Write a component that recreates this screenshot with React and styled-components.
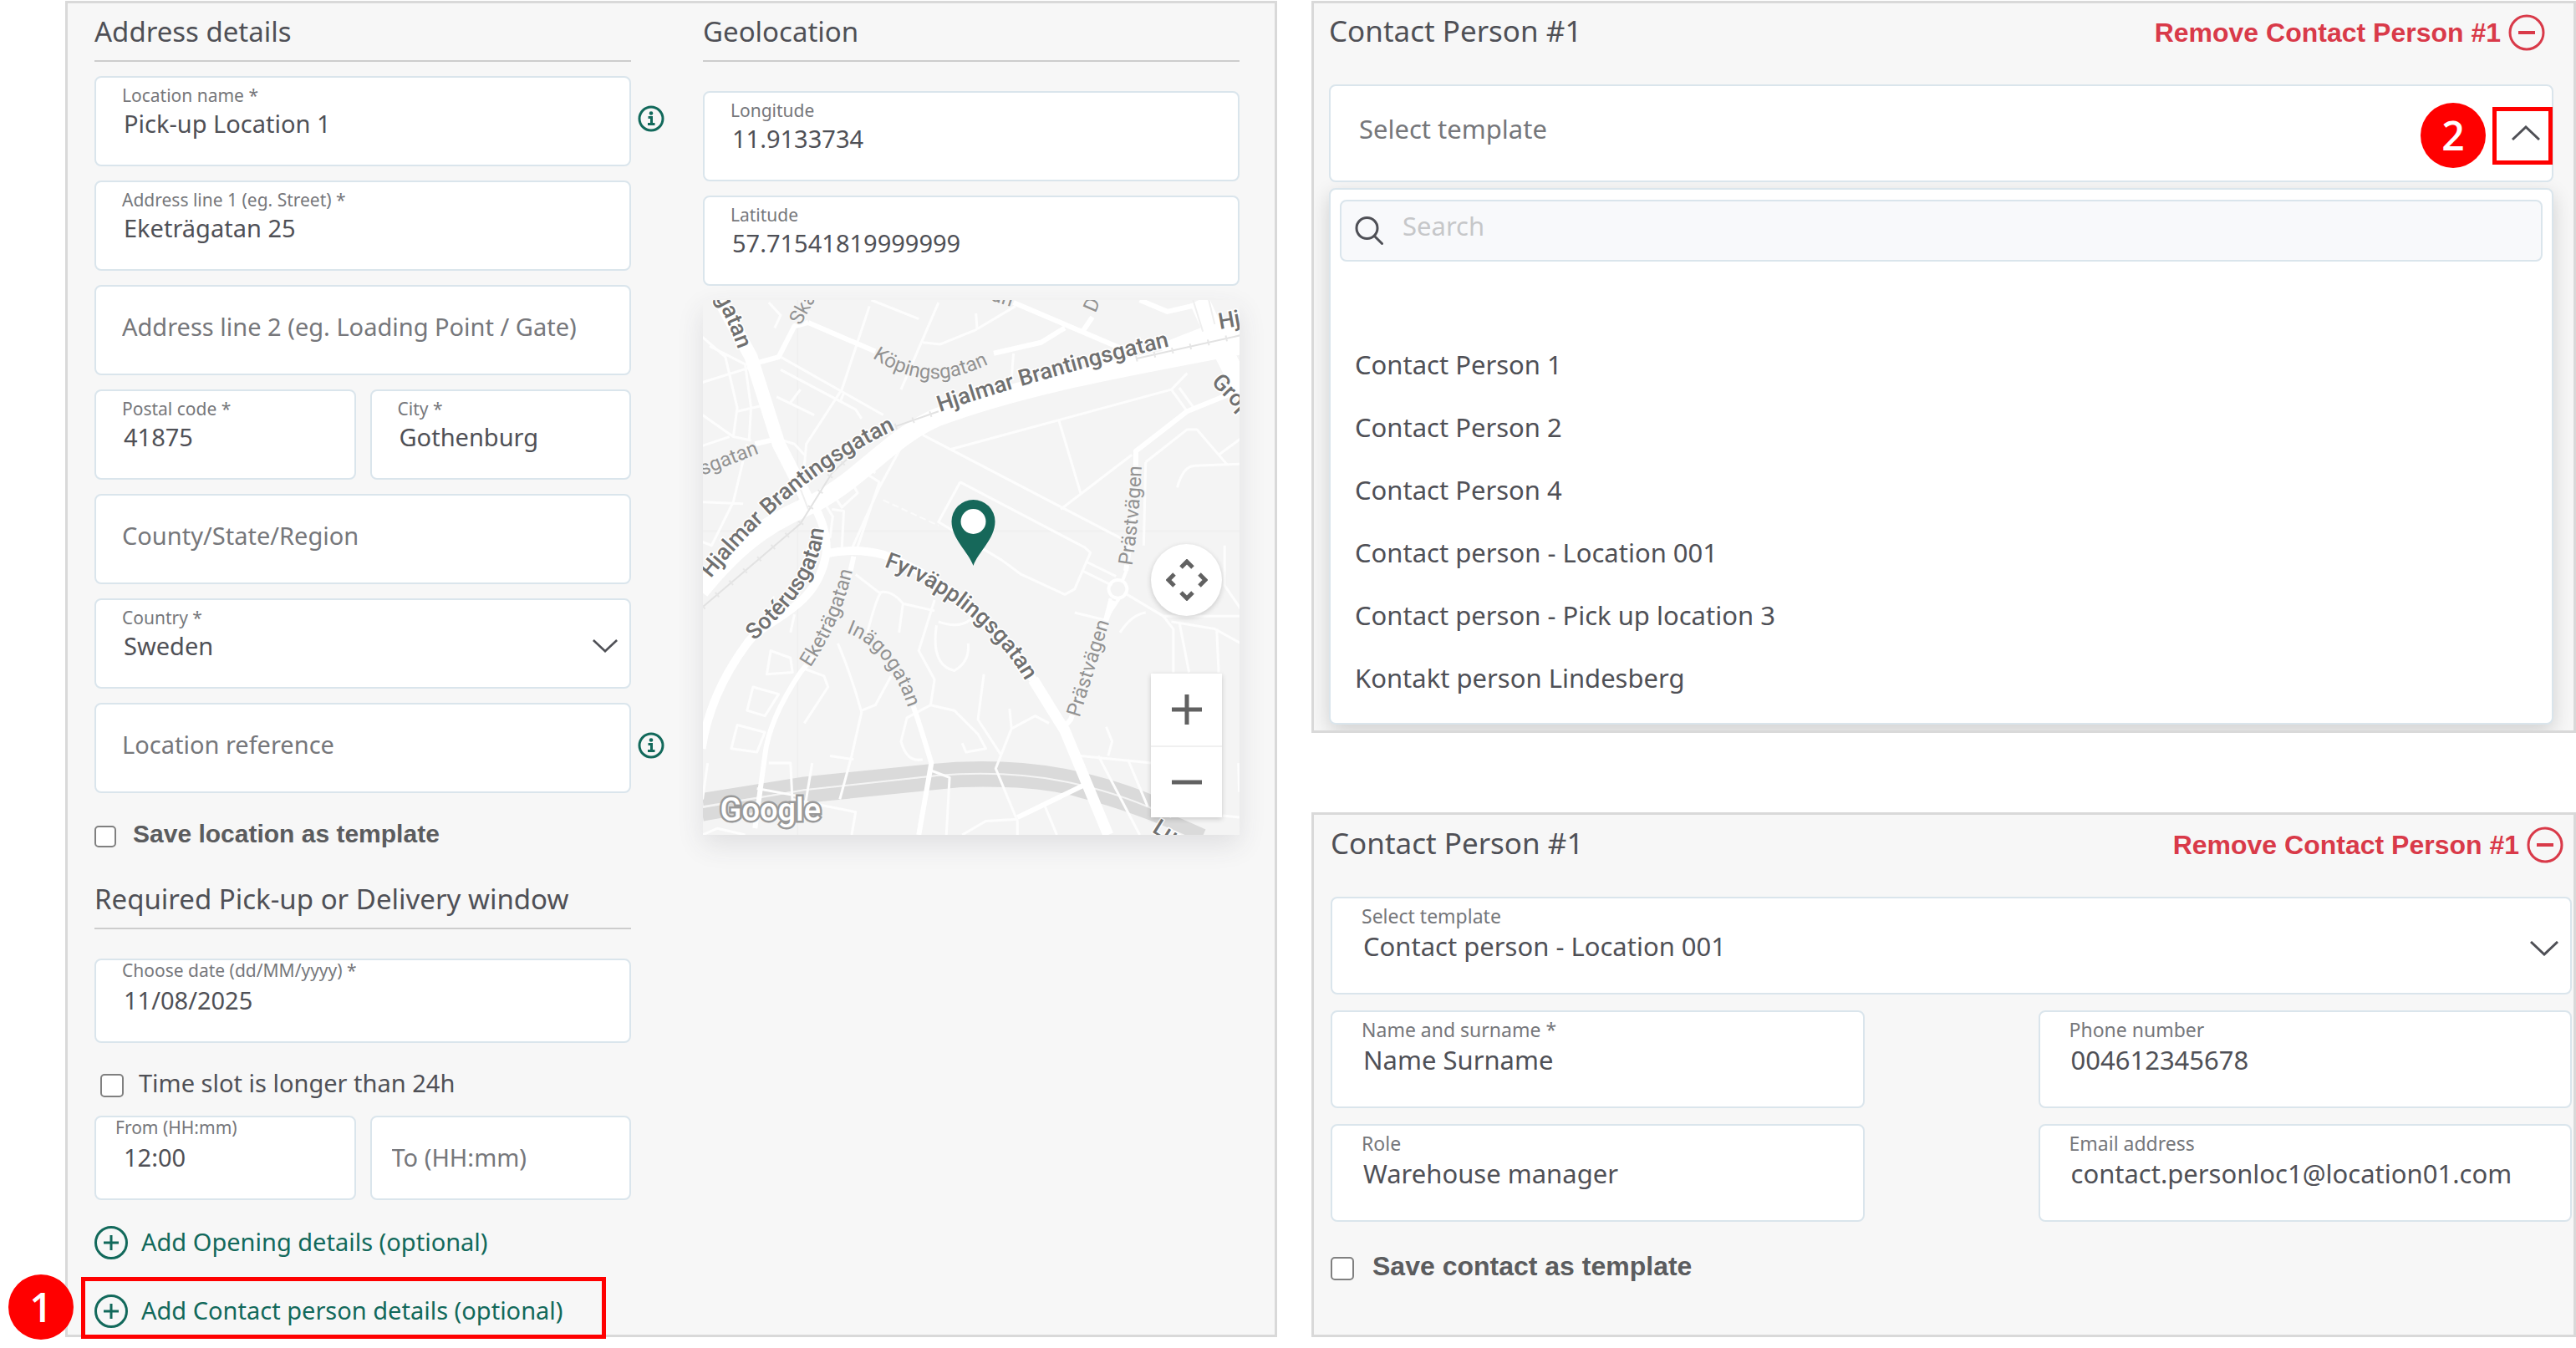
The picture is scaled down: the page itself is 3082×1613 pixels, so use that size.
import React from 'react';
import styled, { createGlobalStyle, ThemeProvider } from 'styled-components';

const GlobalStyle = createGlobalStyle`
  *, *::before, *::after { box-sizing: border-box; }
  body { margin: 0; background: #fff; color: #4f5056; font-family: "Noto Sans", "Open Sans", sans-serif; }
  button, input, select { font: inherit; color: inherit; margin: 0; }
`;

const compact = { title: 33, titleLine: 44, value: 29, label: 21, labelLine: 28, top: 7, emptyTop: 28, inset: 31, shift: 2, field: 108, strong: 30, row: 40, chevron: 30 };
const large = { title: 35, titleLine: 48, value: 31, label: 23, labelLine: 32, top: 5, emptyTop: 31, inset: 35, shift: 2, field: 117, strong: 32, row: 44, chevron: 34 };

const GREEN = '#12695b';
const RED = '#d93a49';
const MARK = '#ff0000';

/* ---------- page frame ---------- */

const Page = styled.main`
  display: grid;
  grid-template-columns: 1450fr 1513fr;
  column-gap: 41px;
  padding: 1px 0 12px 78px;
`;

const RightColumn = styled.div`
  display: flex;
  flex-direction: column;
  gap: 95px;
  min-width: 0;
`;

const Panel = styled.section`
  background: #f7f7f7;
  border: 3px solid #d9d9d9;
  padding: ${p => p.$pad};
  min-width: 0;
  overflow: ${p => (p.$clip ? 'hidden' : 'visible')};
  flex-grow: ${p => (p.$grow ? 1 : 0)};
`;

const TwoColumns = styled.div`
  display: grid;
  grid-template-columns: 1fr 1fr;
  column-gap: 86px;
`;

const Column = styled.div`
  display: flex;
  flex-direction: column;
  min-width: 0;
`;

const Stack = styled.div`
  display: flex;
  flex-direction: column;
  gap: 17px;
  margin-top: ${p => p.$top}px;
`;

const Pair = styled.div`
  display: grid;
  grid-template-columns: 1fr 1fr;
  column-gap: ${p => p.$gap}px;
  row-gap: 19px;
  margin-top: ${p => p.$top || 0}px;
`;

const Title = styled.h2`
  margin: 0;
  font-size: ${p => p.theme.title}px;
  line-height: ${p => p.theme.titleLine}px;
  font-weight: 400;
`;

const RuledTitle = styled(Title)`
  padding-bottom: 12px;
  border-bottom: 2px solid #cdcdcd;
  margin-top: ${p => p.$top || 0}px;
`;

/* ---------- fields ---------- */

const FieldBox = styled.div`
  position: relative;
  display: flex;
  flex-direction: column;
  height: ${p => (p.$tight ? 101 : p.theme.field)}px;
  padding: ${p => (p.$empty ? p.theme.emptyTop : p.$tight ? 0 : p.theme.top)}px 31px 0 ${p => p.$inset || p.theme.inset}px;
  background: #fff;
  border: 2px solid #dae5ec;
  border-radius: 8px;
`;

const FieldLabel = styled.label`
  font-size: ${p => p.theme.label}px;
  line-height: ${p => (p.$tight ? 24 : p.theme.labelLine)}px;
  margin-bottom: ${p => (p.$tight ? 4 : 0)}px;
  color: #76777b;
`;

const FieldInput = styled.input`
  width: 100%;
  height: 40px;
  padding: 0 0 0 ${p => p.$shift}px;
  border: 0;
  outline: 0;
  background: transparent;
  font-size: ${p => p.theme.value}px;
  line-height: 40px;
  &::placeholder { color: #76777b; opacity: 1; }
`;

const FieldSelect = styled.select`
  width: 100%;
  height: 40px;
  padding: 0 0 0 ${p => p.theme.shift}px;
  border: 0;
  outline: 0;
  appearance: none;
  background: transparent;
  font-size: ${p => p.theme.value}px;
  line-height: 40px;
`;

const ChevronSvg = styled.svg`
  position: absolute;
  right: 14px;
  top: 50%;
  width: ${p => p.theme.chevron}px;
  height: 18px;
  margin-top: -6px;
  pointer-events: none;
`;

const InfoButton = styled.button`
  position: absolute;
  left: calc(100% + 10px);
  top: 33px;
  width: 32px;
  height: 32px;
  padding: 0;
  border: 0;
  background: none;
  svg { display: block; width: 32px; height: 32px; }
`;

const CheckLabel = styled.label`
  display: flex;
  align-items: center;
  gap: ${p => p.$gap || 20}px;
  margin-top: ${p => p.$top}px;
  padding-left: ${p => p.$indent || 0}px;
  font-size: ${p => (p.$strong ? p.theme.strong : p.theme.value)}px;
  line-height: ${p => p.theme.row}px;
  ${p => p.$strong && 'font-family: "Liberation Sans", Arial, sans-serif; font-weight: 700; color: #5b5c5e;'}
`;

const Check = styled.input`
  appearance: none;
  flex: none;
  width: ${p => p.$size}px;
  height: ${p => p.$size}px;
  margin-top: 6px;
  background: #fff;
  border: 2px solid #808080;
  border-radius: 5px;
`;

/* ---------- actions and callouts ---------- */

const AddButton = styled.button`
  display: flex;
  align-items: center;
  gap: 16px;
  padding: 0;
  border: 0;
  background: none;
  color: ${GREEN};
  font-size: ${p => p.theme.value}px;
  line-height: 40px;
  svg { flex: none; display: block; width: 40px; height: 40px; }
  span { padding-bottom: 2px; line-height: 36px; }
`;

const Actions = styled.div`
  display: flex;
  flex-direction: column;
  gap: 42px;
  margin-top: 31px;
`;

const Highlighted = styled.div`
  position: relative;
`;

const Outline = styled.div`
  position: absolute;
  inset: ${p => p.$inset};
  width: ${p => p.$width || 'auto'};
  border: 5px solid ${MARK};
  pointer-events: none;
`;

const Badge = styled.span`
  position: absolute;
  left: ${p => p.$left};
  right: ${p => p.$right};
  top: ${p => p.$top}px;
  width: 78px;
  height: 78px;
  border-radius: 50%;
  background: ${MARK};
  color: #fff;
  font-family: "Open Sans", "Noto Sans", sans-serif;
  font-size: 48px;
  font-weight: 600;
  line-height: 78px;
  text-align: center;
`;

const PersonHeader = styled.header`
  display: flex;
  justify-content: space-between;
  align-items: flex-start;
  padding-right: 10px;
  margin-bottom: 40px;
`;

const RemoveButton = styled.button`
  display: flex;
  align-items: center;
  gap: 9px;
  margin-top: 4px;
  padding: 0;
  border: 0;
  background: none;
  color: ${RED};
  font-family: "Liberation Sans", Arial, sans-serif;
  font-weight: 700;
  font-size: 32px;
  line-height: 44px;
  svg { display: block; width: 44px; height: 44px; }
`;

/* ---------- template picker ---------- */

const PickerButton = styled.button`
  position: relative;
  display: block;
  width: 100%;
  height: 117px;
  padding: 0 32px 0 34px;
  background: #fff;
  border: 2px solid #dae5ec;
  border-radius: 8px;
  color: #76777b;
  font-size: 31px;
  text-align: left;
  span { display: block; line-height: 40px; padding-bottom: 11px; }
`;

const PickerChevron = styled(ChevronSvg)`
  margin-top: -10px;
`;

const Menu = styled.div`
  margin-top: 7px;
  padding: 12px 11px 16px;
  background: #fff;
  border: 2px solid #dae5ec;
  border-radius: 8px;
  box-shadow: 0 8px 24px rgba(0, 0, 0, 0.16);
`;

const SearchBox = styled.div`
  display: flex;
  align-items: center;
  gap: 23px;
  height: 74px;
  padding: 0 16px;
  background: #f8f9fb;
  border: 2px solid #dae5ec;
  border-radius: 8px;
  svg { flex: none; width: 34px; height: 34px; }
`;

const SearchInput = styled.input`
  flex: 1;
  height: 70px;
  padding: 0 0 12px;
  border: 0;
  outline: 0;
  background: transparent;
  font-size: 31px;
  &::placeholder { color: #c6c7c9; opacity: 1; }
`;

const Options = styled.ul`
  list-style: none;
  margin: 11px 0 0;
  padding: 0 0 0 18px;
`;

const Option = styled.li`
  height: 75px;
  font-size: 31px;
  line-height: 75px;
`;

/* ---------- map ---------- */

const MapFrame = styled.div`
  position: relative;
  height: 640px;
  background: #f4f4f4;
  box-shadow: 0 12px 30px rgba(60, 60, 70, 0.12);
  > svg { display: block; width: 100%; height: 100%; }
`;

const MapControls = styled.div`
  position: absolute;
  right: 21px;
  bottom: 21px;
  display: flex;
  flex-direction: column;
  gap: 69px;
`;

const MapButton = styled.button`
  display: flex;
  align-items: center;
  justify-content: center;
  width: 85px;
  height: 86px;
  padding: 0;
  border: 0;
  border-radius: ${p => (p.$round ? '50%' : 0)};
  background: #fff;
  box-shadow: ${p => (p.$round ? '0 2px 6px rgba(0, 0, 0, 0.18)' : 'none')};
  svg { width: 50px; height: 50px; }
  & + & { border-top: 2px solid #f0f0f0; }
`;

const ZoomGroup = styled.div`
  box-shadow: 0 2px 6px rgba(0, 0, 0, 0.18);
`;

const MajorName = styled.text`
  font-family: Roboto, sans-serif;
  font-size: 27px;
  font-weight: 500;
  fill: #707070;
  stroke: #fff;
  stroke-width: 3px;
  paint-order: stroke;
`;

const MinorName = styled.text`
  font-family: Roboto, sans-serif;
  font-size: 24px;
  font-weight: 400;
  fill: #929292;
  stroke: #f6f6f6;
  stroke-width: 3px;
  paint-order: stroke;
`;

const Wordmark = styled.text`
  font-family: Roboto, sans-serif;
  font-size: 38px;
  font-weight: 500;
  fill: #fff;
  stroke: #999;
  stroke-width: 5px;
  paint-order: stroke;
`;

const Road = styled.path`
  fill: none;
  stroke: ${p => p.$color || '#fff'};
  stroke-width: ${p => p.$width}px;
  stroke-linejoin: round;
  stroke-dasharray: ${p => p.$dash || 'none'};
  vector-effect: non-scaling-stroke;
`;

const lanes = [
  'M465 60L395 290L305 440L300 500 M470 43L590 95 M640 50L545 290 M600 160L645 165L735 125L835 60 M735 80L738 125 M210 50L240 85L225 120',
  'M240 200L500 360 M230 310L325 360 M290 290L262 330 M240 235L430 345L445 370 M390 325L400 300 M245 430L275 440L300 470',
  'M42 145L100 200L130 340L120 420L165 430 M42 270L160 230 M60 170L150 220L165 340L160 430 M130 350L190 335 M42 360L120 420 M42 445L110 420',
  'M42 600L145 605 M155 440L120 600L65 720L42 710 M670 455L1230 290L1270 245 M600 415L1120 710 M945 375L1000 575 M950 620L1130 470 M1230 290L1270 350 M1250 285L1290 345',
  'M695 545L640 655L800 760L850 800L960 855L985 840L1025 740L1010 725L695 545 M1165 490L1270 400L1295 400L1370 495 M1350 470L1406 425 M1245 560Q1260 500 1290 500L1406 495 M1165 490L1160 720',
  'M1005 790L1080 830 M1015 765L1090 805 M1110 850L1210 915L1406 915 M1210 915L1235 950L1235 1070 M985 905L1060 925 M1100 960Q1130 910 1165 905 M1250 930L1275 1070 M1230 930L1340 950L1406 990 M1345 950L1350 1070 M1365 720L1365 830L1406 895',
  'M430 800L490 850Q520 840 550 880L630 900 M500 850Q490 830 455 980 M550 880L540 960 M630 870L590 1010L630 1090L620 1160 M635 940Q620 1050 680 1065Q720 1040 715 990 M640 930Q690 950 720 925L780 960',
  'M755 1075L740 1200L800 1300 M820 1170L825 1225L785 1335L840 1480L840 1518 M825 1225L885 1190L920 1210 M620 1160L680 1175L740 1240L760 1280L710 1290L700 1265 M620 1160L560 1195L545 1260Q560 1320 600 1310',
  'M385 990Q420 1080 445 1180L420 1300L390 1420 M445 1175L480 1160L520 1080 M215 1010L265 1030L270 1070L205 1075Z M170 1110L235 1130L200 1190L155 1175Z M130 1215L200 1235L180 1290L115 1280Z',
  'M275 910L265 960 M300 1060L350 1080L360 1110L300 1210 M210 1320L265 1320L270 1430 M320 1320L300 1450 M270 1420L430 1455L420 1518 M180 1390L280 1410 M365 1300L425 1310 M55 1320L42 1420 M42 1518L80 1500L150 1518',
  'M700 1518L760 1480L840 1475 M620 1340L668 1360L660 1518 M910 1440L940 1518 M1000 1300L1180 1320 M1045 1300L1150 1518 M1120 1310L1170 1440 M1065 1220L1080 1260L1070 1300 M1406 1470L1360 1465 M1400 1320L1402 1400',
  'M560 420L490 560L420 730 M440 510L490 545L430 740 M380 590L425 555L435 575L395 615Z M370 620L400 625L395 730 M355 610L372 640L365 700 M830 190L825 260 M480 520L455 500',
];

const streets = [
  'M310 105L480 185 M780 190L900 160L960 120 M830 50L1100 175 M310 105L275 115L235 200L185 215 M1030 90L1005 130 M1150 43L1220 75L1300 55',
  'M425 750C400 900 330 1020 290 1070Q210 1200 200 1300L175 1500',
  'M560 1120Q575 1150 622 1320L590 1518',
  'M1406 290L1270 350L1140 460L1140 600L1115 790 M1083 872L1060 940L975 1200L955 1225 M1010 1380L840 1470 M175 440L215 430',
];

function Roads() {
  return (
    <svg x="0" y="0" width="644" height="640" viewBox="42 43 1364 1475" preserveAspectRatio="none">
      <Road $width={2} $color="#f0f0f0" d="M42 680H1406 M283 43V1518" />
      <Road $width={15} $color="#dadada" d="M42 1420L300 1375L620 1340Q800 1320 970 1355Q1100 1385 1200 1435" />
      <Road $width={16} $color="#dadada" d="M42 1462L300 1412L700 1368Q900 1362 1010 1400Q1150 1440 1310 1520" />
      <Road $width={2} $dash="8 4" $color="#fbfbfb" d="M500 595L640 665" />
      <Road $width={2} $color="#f4f4f4" d="M42 1442L300 1394L640 1354Q830 1338 990 1378Q1120 1410 1230 1470" />
      {lanes.map(d => <Road key={d} $width={3} $color="#fdfdfd" d={d} />)}
      {streets.map(d => <Road key={d} $width={6} d={d} />)}
      <Road $width={4} d="M1095 815A23 25 0 1 1 1094 815Z M1105 820L1116 790 M1076 866L1062 925L1100 862" />
      <Road $width={10} d="M320 600Q362 680 355 745C330 900 200 920 155 990Q60 1130 40 1280" />
      <Road $width={10} d="M355 742Q430 725 500 745C700 830 830 1000 880 1090" />
      <Road $width={13} d="M880 1090L960 1230L1070 1518" />
      <Road $width={16} d="M75 20L165 200L235 440L310 600" />
      <Road $width={22} d="M36 845C150 690 230 650 330 600C450 530 520 420 640 365C850 280 1100 230 1420 165" />
      <Road $width={24} d="M1210 190L1420 100 M1300 43L1350 160L1420 310" />
      <Road $width={2} $color="#efefef" d="M1285 43L1310 130 M1325 43L1340 110 M285 550L310 620" />
      <Road $width={2} $color="#e2e2e2" d="M42 890L290 660L370 520L430 460 M530 392L640 350 M1140 205L1406 140" />
      <Road $width={7} $dash="2 20" $color="#e6e6e6" d="M42 890L290 660L370 520L430 460 M530 392L640 350 M1140 205L1406 140" />
    </svg>
  );
}

const majorNames = [
  ['hj-east', 'M284 134Q420 88 590 48', 'Hjalmar Brantingsgatan'],
  ['hj-west', 'M10 333C60 272 130 198 255 144', 'Hjalmar Brantingsgatan'],
  ['north', 'M15 -3Q32 26 50 80', 'gatan'],
  ['hj-edge', 'M619 35L690 22', 'Hj'],
  ['gropegard', 'M608 99L680 172', 'Grop'],
  ['soterus', 'M62 408C108 365 148 325 146 250', 'Sotérusgatan'],
  ['fyrv', 'M217 319C290 345 360 400 394 470', 'Fyrväpplingsgatan'],
  ['lundby', 'M537 636L640 700', 'Lundby'],
];

const minorNames = [
  ['ska', 'M117 31L160 -46', 'Ska'],
  ['sgatan', 'M0 210L90 175', 'sgatan'],
  ['koping', 'M203 69C240 93 285 112 362 66', 'Köpingsgatan'],
  ['an', 'M344 0L400 18', 'an'],
  ['d', 'M470 16L490 -30', 'D'],
  ['eketra', 'M129 440C155 400 170 370 184 304', 'Eketrägatan'],
  ['inago', 'M172 398C205 410 232 440 250 500', 'Inägogatan'],
  ['prast-n', 'M514 318Q523 260 526 185', 'Prästvägen'],
  ['prast-s', 'M451 500L491 372', 'Prästvägen'],
];

function StreetMap() {
  return (
    <MapFrame>
      <svg viewBox="0 0 643 640" preserveAspectRatio="xMidYMid slice" role="img" aria-label="Map">
        <Roads />
        <defs>
          {[...majorNames, ...minorNames].map(([id, d]) => <path key={id} id={id} d={d} />)}
        </defs>
        {minorNames.map(([id, , name]) => (
          <MinorName key={id}><textPath href={`#${id}`}>{name}</textPath></MinorName>
        ))}
        {majorNames.map(([id, , name]) => (
          <MajorName key={id}><textPath href={`#${id}`}>{name}</textPath></MajorName>
        ))}
        <Wordmark x="21" y="623">Google</Wordmark>
        <path d="M324 318C318 301 298 286 298 265A26 26 0 0 1 350 265C350 286 330 301 324 318Z" fill="#16685a" />
        <circle cx="324" cy="265" r="15" fill="#fff" />
      </svg>
      <MapControls>
        <MapButton $round aria-label="Map camera controls">
          <svg viewBox="0 0 50 50" fill="none" stroke="#616161" strokeWidth="5">
            <path d="M18 10L25 3L32 10 M18 40L25 47L32 40 M10 18L3 25L10 32 M40 18L47 25L40 32" />
          </svg>
        </MapButton>
        <ZoomGroup>
          <MapButton aria-label="Zoom in">
            <svg viewBox="0 0 50 50" stroke="#616161" strokeWidth="5"><path d="M7 25H43 M25 7V43" /></svg>
          </MapButton>
          <MapButton aria-label="Zoom out">
            <svg viewBox="0 0 50 50" stroke="#616161" strokeWidth="5"><path d="M7 25H43" /></svg>
          </MapButton>
        </ZoomGroup>
      </MapControls>
    </MapFrame>
  );
}

/* ---------- small pieces ---------- */

const ChevronDown = () => (
  <ChevronSvg viewBox="0 0 34 18" fill="none" stroke="#4f5056" strokeWidth="3"><path d="M1 1L17 16L33 1" /></ChevronSvg>
);

const Info = () => (
  <InfoButton aria-label="More information">
    <svg viewBox="0 0 32 32" fill="none" stroke={GREEN}>
      <circle cx="16" cy="16" r="14" strokeWidth="3" />
      <circle cx="16" cy="9.5" r="2.3" fill={GREEN} stroke="none" />
      <path d="M12.5 14.5H16.5V22.5 M12 22.5H20.5" strokeWidth="3" />
    </svg>
  </InfoButton>
);

function Field({ id, label, value, tight, inset, shift = 2, info }) {
  const empty = value === undefined;
  return (
    <FieldBox $empty={empty} $tight={tight} $inset={inset}>
      {!empty && <FieldLabel htmlFor={id} $tight={tight}>{label}</FieldLabel>}
      {empty
        ? <FieldInput id={id} aria-label={label} placeholder={label} $shift={0} />
        : <FieldInput id={id} defaultValue={value} $shift={shift} />}
      {info && <Info />}
    </FieldBox>
  );
}

function SelectField({ id, label, value }) {
  return (
    <FieldBox>
      <FieldLabel htmlFor={id}>{label}</FieldLabel>
      <FieldSelect id={id} defaultValue={value}><option>{value}</option></FieldSelect>
      <ChevronDown />
    </FieldBox>
  );
}

function AddAction({ children }) {
  return (
    <AddButton type="button">
      <svg viewBox="0 0 40 40" fill="none" stroke={GREEN} strokeWidth="3">
        <circle cx="20" cy="20" r="18.5" /><path d="M11 20H29 M20 11V29" />
      </svg>
      <span>{children}</span>
    </AddButton>
  );
}

function PersonTop() {
  return (
    <PersonHeader>
      <Title>Contact Person #1</Title>
      <RemoveButton type="button">
        Remove Contact Person #1
        <svg viewBox="0 0 44 44" fill="none" stroke={RED} strokeWidth="3">
          <circle cx="22" cy="22" r="20" /><path d="M12 22H32" strokeWidth="4" />
        </svg>
      </RemoveButton>
    </PersonHeader>
  );
}

const people = [
  '', 'Contact Person 1', 'Contact Person 2', 'Contact Person 4',
  'Contact person - Location 001', 'Contact person - Pick up location 3', 'Kontakt person Lindesberg',
];

export default function App() {
  return (
    <>
      <GlobalStyle />
      <Page>
        <ThemeProvider theme={compact}>
          <Panel $pad="12px 42px 8px 32px">
            <TwoColumns>
              <Column>
                <RuledTitle>Address details</RuledTitle>
                <Stack $top={17}>
                  <Field id="name" label="Location name *" value="Pick-up Location 1" info />
                  <Field id="line1" label="Address line 1 (eg. Street) *" value="Eketrägatan 25" />
                  <Field id="line2" label="Address line 2 (eg. Loading Point / Gate)" />
                  <Pair $gap={17}>
                    <Field id="postal" label="Postal code *" value="41875" />
                    <Field id="city" label="City *" value="Gothenburg" />
                  </Pair>
                  <Field id="region" label="County/State/Region" />
                  <SelectField id="country" label="Country *" value="Sweden" />
                  <Field id="reference" label="Location reference" info />
                </Stack>
                <CheckLabel $strong $top={29}>
                  <Check type="checkbox" $size={26} />Save location as template
                </CheckLabel>
                <RuledTitle $top={36}>Required Pick-up or Delivery window</RuledTitle>
                <Stack $top={35}>
                  <Field id="date" label="Choose date (dd/MM/yyyy) *" value="11/08/2025" tight />
                </Stack>
                <CheckLabel $top={28} $indent={7} $gap={18}>
                  <Check type="checkbox" $size={28} />Time slot is longer than 24h
                </CheckLabel>
                <Pair $gap={17} $top={19}>
                  <Field id="from" label="From (HH:mm)" value="12:00" tight inset={23} shift={10} />
                  <Field id="to" label="To (HH:mm)" tight inset={24} />
                </Pair>
                <Actions>
                  <AddAction>Add Opening details (optional)</AddAction>
                  <Highlighted>
                    <AddAction>Add Contact person details (optional)</AddAction>
                    <Outline $inset="-21px 30px -13px -16px" />
                    <Badge $left="-103px" $top={-24}>1</Badge>
                  </Highlighted>
                </Actions>
              </Column>
              <Column>
                <RuledTitle>Geolocation</RuledTitle>
                <Stack $top={35}>
                  <Field id="lng" label="Longitude" value="11.9133734" />
                  <Field id="lat" label="Latitude" value="57.71541819999999" />
                  <StreetMap />
                </Stack>
              </Column>
            </TwoColumns>
          </Panel>
        </ThemeProvider>

        <ThemeProvider theme={large}>
          <RightColumn>
            <Panel $pad="9px 24px 7px 18px" $clip>
              <PersonTop />
              <Highlighted>
                <PickerButton type="button" aria-haspopup="listbox" aria-expanded="true">
                  <span>Select template</span>
                  <PickerChevron viewBox="0 0 34 18" fill="none" stroke="#4f5056" strokeWidth="3">
                    <path d="M1 17L17 2L33 17" />
                  </PickerChevron>
                </PickerButton>
                <Outline $inset="27px 1px 21px auto" $width="72px" />
                <Badge $right="81px" $top={22}>2</Badge>
              </Highlighted>
              <Menu>
                <SearchBox>
                  <svg viewBox="0 0 34 34" fill="none" stroke="#4f5056" strokeWidth="3" strokeLinecap="round">
                    <circle cx="14.5" cy="14" r="12.5" /><path d="M23.5 23.5L32.5 32.5" />
                  </svg>
                  <SearchInput type="text" placeholder="Search" aria-label="Search" />
                </SearchBox>
                <Options role="listbox" aria-label="Select template">
                  {people.map(name => <Option key={name} role="option">{name}</Option>)}
                </Options>
              </Menu>
            </Panel>

            <Panel $pad="10px 2px 60px 20px" $grow>
              <PersonTop />
              <SelectField id="template" label="Select template" value="Contact person - Location 001" />
              <Pair $gap={208} $top={19}>
                <Field id="person" label="Name and surname *" value="Name Surname" />
                <Field id="phone" label="Phone number" value="004612345678" />
                <Field id="role" label="Role" value="Warehouse manager" />
                <Field id="email" label="Email address" value="contact.personloc1@location01.com" />
              </Pair>
              <CheckLabel $strong $top={31} $gap={22}>
                <Check type="checkbox" $size={28} />Save contact as template
              </CheckLabel>
            </Panel>
          </RightColumn>
        </ThemeProvider>
      </Page>
    </>
  );
}
